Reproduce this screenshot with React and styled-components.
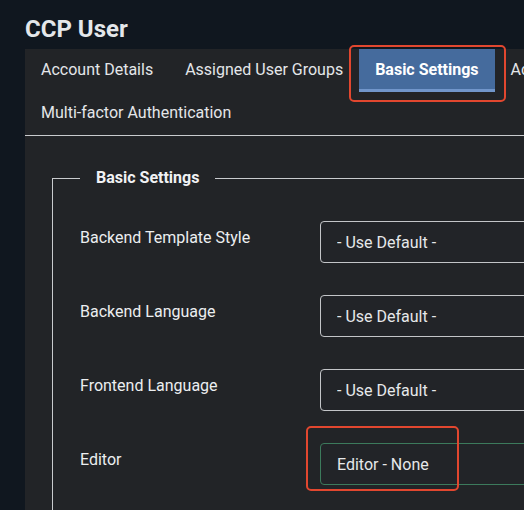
import styled, { createGlobalStyle } from "styled-components";

const Global = createGlobalStyle`
  html, body {
    margin: 0;
    background: #10171f;
    overflow: hidden;
  }
  body {
    font-family: Roboto, "Liberation Sans", sans-serif;
    color: #e9eaec;
  }
`;

const Page = styled.div`
  padding: 16px 0 0 25px;
  width: 800px;
`;

const Title = styled.h1`
  margin: 0 0 6px;
  font-size: 24px;
  line-height: 27px;
  font-weight: 700;
  color: #e4e7ea;
`;

const Panel = styled.div`
  background: #222427;
  min-height: 480px;
`;

const TabBar = styled.ul`
  display: flex;
  flex-wrap: wrap;
  width: 740px;
  margin: 0;
  padding: 0;
  list-style: none;
  border-bottom: 1px solid #c9cbce;
`;

const Tab = styled.li`
  position: relative;
  padding: 2px 16px 0;
  height: 38px;
  line-height: 38px;
  font-size: 16px;
  font-weight: ${(p) => (p.$active ? 700 : 400)};
  color: ${(p) => (p.$active ? "#ffffff" : "#e4e6e9")};
  background: ${(p) => (p.$active ? "#456b9d" : "transparent")};
  border-bottom: 3px solid ${(p) => (p.$active ? "#7196cb" : "transparent")};
  white-space: nowrap;
`;

const Highlight = styled.span`
  position: absolute;
  box-sizing: border-box;
  left: ${(p) => p.$l}px;
  top: ${(p) => p.$t}px;
  right: ${(p) => (p.$r !== undefined ? `${p.$r}px` : "auto")};
  bottom: ${(p) => p.$b}px;
  width: ${(p) => (p.$w ? `${p.$w}px` : "auto")};
  border: 2px solid #e2472f;
  border-radius: 5px;
  pointer-events: none;
`;

const Body = styled.div`
  padding: 31px 0 0 27px;
`;

const Fieldset = styled.fieldset`
  margin: 0;
  padding: 32px 0 0 27px;
  border: none;
  border-top: 1px solid #c9cbce;
  border-left: 1px solid #c9cbce;
`;

const Legend = styled.legend`
  padding: 0 16px;
  font-size: 16px;
  font-weight: 700;
  line-height: 22px;
  color: #f1f2f4;
`;

const Row = styled.div`
  display: grid;
  grid-template-columns: 240px 1fr;
  align-items: start;
  margin-bottom: 32px;
`;

const Label = styled.label`
  padding-top: 5px;
  font-size: 16px;
  line-height: 24px;
  color: #eceef0;
`;

const FieldWrap = styled.div`
  position: relative;
`;

const Select = styled.select`
  appearance: none;
  width: 100%;
  height: 42px;
  box-sizing: border-box;
  padding: 0 16px;
  font-family: inherit;
  font-size: 16px;
  color: #e6e8ea;
  background: #222428;
  border: 1px solid ${(p) => (p.$valid ? "#3c7a5c" : "#c3c5c8")};
  border-radius: 4px;
  outline: none;
`;

const rows = [
  { label: "Backend Template Style", value: "- Use Default -" },
  { label: "Backend Language", value: "- Use Default -" },
  { label: "Frontend Language", value: "- Use Default -" },
  { label: "Editor", value: "Editor - None", valid: true, marked: true },
];

const tabs = [
  "Account Details",
  "Assigned User Groups",
  "Basic Settings",
  "Accessibility Settings",
  "Multi-factor Authentication",
];

export default function App() {
  return (
    <>
      <Global />
      <Page>
        <Title>CCP User</Title>
        <Panel>
          <TabBar>
            {tabs.map((t) => (
              <Tab key={t} $active={t === "Basic Settings"}>
                {t}
                {t === "Basic Settings" && (
                  <Highlight $l={-10} $t={-4} $r={-11} $b={-13} />
                )}
              </Tab>
            ))}
          </TabBar>
          <Body>
            <Fieldset>
              <Legend>Basic Settings</Legend>
              {rows.map((r) => (
                <Row key={r.label}>
                  <Label>{r.label}</Label>
                  <FieldWrap>
                    <Select $valid={r.valid} defaultValue={r.value}>
                      <option>{r.value}</option>
                    </Select>
                    {r.marked && <Highlight $l={-14} $t={-17} $b={-6} $w={153} />}
                  </FieldWrap>
                </Row>
              ))}
            </Fieldset>
          </Body>
        </Panel>
      </Page>
    </>
  );
}
